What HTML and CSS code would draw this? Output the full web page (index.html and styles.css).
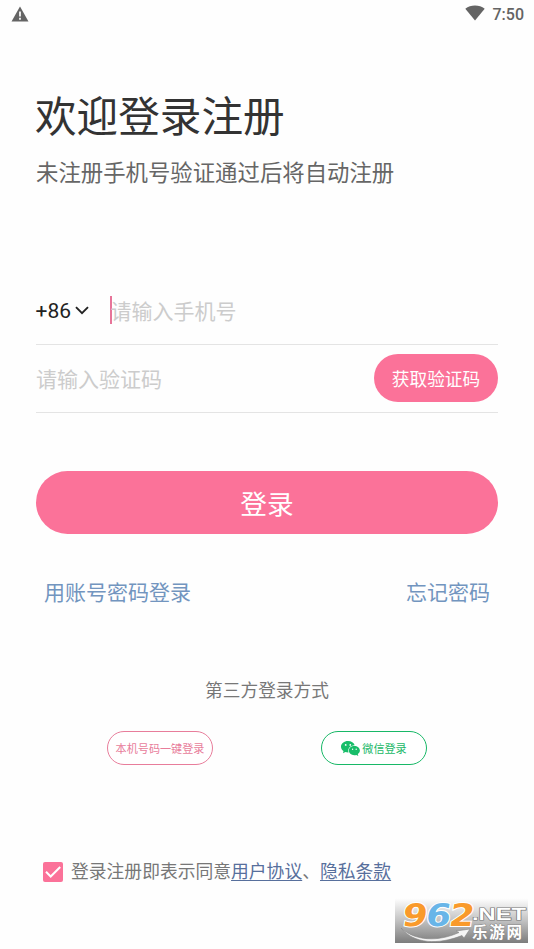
FILE: index.html
```html
<!DOCTYPE html>
<html lang="zh-CN">
<head>
<meta charset="utf-8">
<title>登录注册</title>
<link rel="stylesheet" href="styles.css">
</head>
<body>
<div class="screen">
  <header class="status">
    <svg class="warning" width="18" height="16" viewBox="0 0 18 16"><path d="M9 .5 17.500 15.500H.5z" fill="#646464"/><path d="M9 5.600v5M9 11.700v2" stroke="#fff" stroke-width="1.700"/></svg>
    <div class="status-right">
      <svg width="20" height="16" viewBox="0 0 20 16"><path d="M.3 3.700Q4.500.5 10 .5t9.700 3.200L10 15.500z" fill="#646464"/></svg>
      <span class="time">7:50</span>
    </div>
  </header>
  <main class="content">
    <h1 class="title">欢迎登录注册</h1>
    <p class="subtitle">未注册手机号验证通过后将自动注册</p>
    <div class="field phone">
      <span class="code">+86</span>
      <svg class="chevron" width="14" height="9" viewBox="0 0 14 9"><path d="m1 1.200 6 6 6-6" fill="none" stroke="#222" stroke-width="1.900"/></svg>
      <span class="caret"></span>
      <span class="placeholder">请输入手机号</span>
    </div>
    <div class="field verify">
      <span class="placeholder">请输入验证码</span>
      <button class="get-code">获取验证码</button>
    </div>
    <button class="login">登录</button>
    <nav class="links"><a>用账号密码登录</a><a>忘记密码</a></nav>
    <p class="third">第三方登录方式</p>
    <div class="providers">
      <button class="provider local">本机号码一键登录</button>
      <button class="provider wechat">
        <svg width="19" height="15" viewBox="0 0 19 15"><path fill="#18bd69" d="M7 0C3.100 0 0 2.500 0 5.700c0 1.800 1 3.300 2.500 4.400L2 12.200l2.400-1.200c.9.300 1.700.4 2.600.4h.5C6.400 7.700 9 4.500 13.700 4.300 13 1.800 10.300 0 7 0z"/><path fill="#18bd69" d="M13.300 5c-3.100 0-5.500 2-5.500 4.600s2.400 4.600 5.500 4.600c.7 0 1.400-.1 2-.3l2 1-.5-1.800c1.300-.9 2.100-2.100 2.100-3.500C18.900 7 16.400 5 13.300 5z"/><g fill="#fff"><circle cx="4.700" cy="3.900" r=".9"/><circle cx="9.300" cy="3.900" r=".9"/><circle cx="11.600" cy="8.200" r=".7"/><circle cx="15.200" cy="8.200" r=".7"/></g></svg>
        <span>微信登录</span>
      </button>
    </div>
    <div class="agreement">
      <svg class="check" width="20" height="20" viewBox="0 0 20 20"><rect width="20" height="20" rx="2" fill="#fb7299"/><path d="m3 9.800 4.700 4.700L17.200 5" fill="none" stroke="#fff" stroke-width="2"/></svg>
      <span>登录注册即表示同意<a>用户协议</a>、<a>隐私条款</a></span>
    </div>
  </main>
  <svg class="watermark" width="133" height="45" viewBox="0 0 133 45">
    <defs>
      <linearGradient id="fade" x2="0" y2="1"><stop stop-color="#fff"/><stop offset=".5" stop-color="#c2c2c2"/><stop offset="1" stop-color="#7c7c7c"/></linearGradient>
    </defs>
    <rect width="133" height="45" fill="url(#fade)"/>
    <g class="digits" transform="translate(0 28) skewX(-9)"><text x="6" y="0" fill="#f99a2b" textLength="25" lengthAdjust="spacingAndGlyphs">9</text><text x="29.500" y="0" fill="#68b5e8" textLength="25" lengthAdjust="spacingAndGlyphs">6</text><text x="53" y="0" fill="#f99a2b" textLength="25" lengthAdjust="spacingAndGlyphs">2</text></g>
    <path d="M6 30C20 43 43 44 64 34.500L61 33l14-2-6 9-2-2.500C43 47 19 46 6 30z" fill="#f5f5f5" stroke="#858585" stroke-width=".6"/>
    <text class="net" x="77" y="22" textLength="54" lengthAdjust="spacingAndGlyphs">.NET</text>
    <text class="brand" x="77" y="40" textLength="50">乐游网</text>
  </svg>
</div>
</body>
</html>
```

FILE: styles.css
```css
* { box-sizing: border-box; }
body { margin: 0; background: #fefefe; font-family: Roboto, "Noto Sans CJK SC", sans-serif; }
button { border: 0; padding: 0; font-family: inherit; }
svg { display: block; flex: none; }
h1, p { margin: 0; font-weight: 400; white-space: nowrap; }
.screen { position: relative; width: 534px; height: 949px; overflow: hidden; }
.status { height: 28px; padding: 0 10px 0 11px; display: flex; justify-content: space-between; align-items: center; }
.status-right { display: flex; align-items: center; gap: 8px; margin-top: -2px; }
.warning { margin-top: -1px; }
.time { font-size: 16px; line-height: 20px; font-weight: 500; color: #646464; padding-top: 3px; }
.content { padding: 0 36px; }
.title { margin: 60px 0 0 -1px; height: 60px; line-height: 60px; font-size: 41.600px; color: #333; }
.subtitle { margin-top: 10px; height: 30px; line-height: 30px; font-size: 22.400px; color: #666; }
.field { display: flex; align-items: center; height: 68px; border-bottom: 1px solid #e4e4e4; }
.phone { margin-top: 89px; }
.code { width: 36px; font-size: 21px; color: #222; margin-left: -.5px; margin-right: .5px; }
.chevron { margin-left: 3px; }
.caret { width: 2px; height: 28px; margin: -1px 0 0 21px; background: #e77499; }
.placeholder { font-size: 21px; line-height: 30px; color: #ccc; white-space: nowrap; padding-top: 2px; }
.phone .placeholder { margin-left: -1.500px; }
.verify { justify-content: space-between; }
.get-code { width: 124px; height: 48px; margin-top: -2px; border-radius: 24px; background: #fb7299; color: #fff; font-size: 17.700px; }
.login { display: block; width: 462px; height: 63px; margin-top: 58px; border-radius: 32px; background: #fb7299; color: #fff; font-size: 26.700px; }
.links { display: flex; justify-content: space-between; margin-top: 44px; padding: 0 8px; font-size: 21px; line-height: 30px; color: #7295bf; }
.third { margin-top: 70px; text-align: center; font-size: 17.700px; line-height: 26px; color: #777; }
.providers { display: flex; justify-content: space-between; margin: 27px 0 0 71px; width: 320px; }
.provider { display: flex; align-items: center; justify-content: center; width: 106px; height: 34px; border: 1px solid; border-radius: 17px; background: #fff; font-size: 11.100px; white-space: nowrap; }
.local { color: #e87d9b; }
.wechat { color: #18b867; gap: 2px; }
.agreement { display: flex; align-items: center; gap: 8px; margin: 94px 0 0 7px; height: 26px; font-size: 17.800px; line-height: 26px; color: #777; white-space: nowrap; }
.agreement a { color: #576f9c; text-decoration: underline; text-decoration-thickness: 1px; text-underline-offset: 2px; }
.watermark { position: absolute; left: 395px; top: 898px; }
.digits { font: bold 31px "DejaVu Sans", sans-serif; stroke: #fff; stroke-width: 2px; paint-order: stroke; }
.net { font: bold 17px "Liberation Sans", sans-serif; fill: #fff; stroke: #777; stroke-width: 1.200px; paint-order: stroke; }
.brand { font: bold 15.500px "Noto Sans CJK SC", sans-serif; fill: #fff; stroke: #888; stroke-width: 1px; paint-order: stroke; }
```
